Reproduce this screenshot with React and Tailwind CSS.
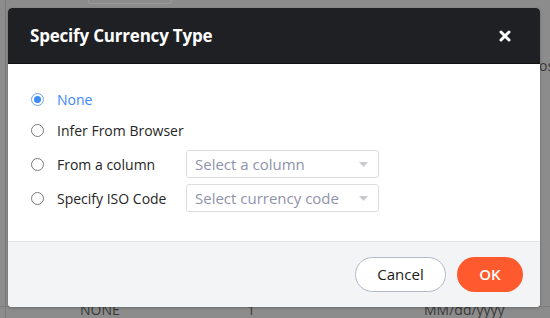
import { X } from "lucide-react";

const options = [
  { label: "None", checked: true, gap: "mt-0" },
  { label: "Infer From Browser", gap: "mt-[3px]" },
  { label: "From a column", select: "Select a column", gap: "mt-[6px]" },
  { label: "Specify ISO Code", select: "Select currency code", gap: "mt-[6px]" },
];

function Radio({ checked }) {
  return (
    <span
      className={
        "flex h-[13px] w-[13px] shrink-0 items-center justify-center rounded-full border bg-white " +
        (checked ? "border-[#6fa3ee]" : "border-[#7a7a7a]")
      }
    >
      {checked && <span className="h-[7px] w-[7px] rounded-full bg-[#3d8af7]" />}
    </span>
  );
}

function SelectBox({ placeholder }) {
  return (
    <div className="flex h-[28px] w-[193px] items-center justify-between rounded-[3px] border border-[#dcdde2] bg-white pl-[8px] pr-[10px]">
      <span className="text-[15px] text-[#8f93aa]">{placeholder}</span>
      <svg width="9" height="5" viewBox="0 0 9 5">
        <path d="M0 0h9L4.5 5z" fill="#c9cacf" />
      </svg>
    </div>
  );
}

export default function App() {
  return (
    <div
      className="relative h-[318px] w-[550px] overflow-hidden bg-[#8c8c8c]"
      style={{ fontFamily: "'Open Sans', 'Liberation Sans', sans-serif" }}
    >
      {/* page behind the overlay */}
      <div className="absolute left-[5px] top-0 h-full w-px bg-[#7a7a7a]" />
      <div className="absolute left-[88px] top-0 h-[4px] w-[84px] rounded-b-[3px] border border-t-0 border-[#9a9a9a]" />
      <div className="absolute left-0 top-[306px] h-px w-full bg-[#7d7d7d]" />
      <span className="absolute left-[80px] top-[302px] text-[14px] leading-[16px] text-[#3a3a3a]">NONE</span>
      <span className="absolute left-[247px] top-[302px] text-[14px] leading-[16px] text-[#3a3a3a]">1</span>
      <span className="absolute left-[424px] top-[302px] text-[14px] leading-[16px] text-[#3a3a3a]">MM/dd/yyyy</span>
      <span className="absolute left-[539px] top-[58px] text-[14px] leading-[16px] text-[#3a3a3a]">os</span>

      <div className="relative flex h-full flex-col pb-[11px] pl-[8px] pr-[10px] pt-[8px]">
        <div className="flex flex-1 flex-col overflow-hidden rounded-[4px] bg-white shadow-[0_1px_3px_rgba(0,0,0,0.25)]">
          <div className="flex h-[56px] items-center justify-between border-b border-[#111] bg-[#1f2024] pl-[22px] pr-[27px]">
            <h1 className="text-[17px] font-bold tracking-[-0.2px] text-white">Specify Currency Type</h1>
            <X size={16} strokeWidth={4.5} className="text-white" />
          </div>

          <div className="flex flex-1 flex-col pl-[23px] pt-[21px]">
            {options.map((o) => (
              <div key={o.label} className={"flex h-[28px] items-center " + o.gap}>
                <div className="flex w-[155px] items-center gap-[13px]">
                  <Radio checked={o.checked} />
                  <span
                    className={
                      "text-[14px] " + (o.checked ? "text-[#3d8af7]" : "text-[#262626]")
                    }
                  >
                    {o.label}
                  </span>
                </div>
                {o.select && <SelectBox placeholder={o.select} />}
              </div>
            ))}
          </div>

          <div className="flex h-[66px] items-center justify-end gap-[11px] border-t border-[#e4e5e8] bg-[#f3f4f6] pr-[17px]">
            <button className="h-[35px] w-[91px] rounded-full border border-[#b5b8cc] bg-white text-[15px] text-[#1a1a1a]">
              Cancel
            </button>
            <button className="h-[35px] w-[66px] rounded-full bg-[#ff5a2e] text-[15px] font-semibold text-white">
              OK
            </button>
          </div>
        </div>
      </div>
    </div>
  );
}
